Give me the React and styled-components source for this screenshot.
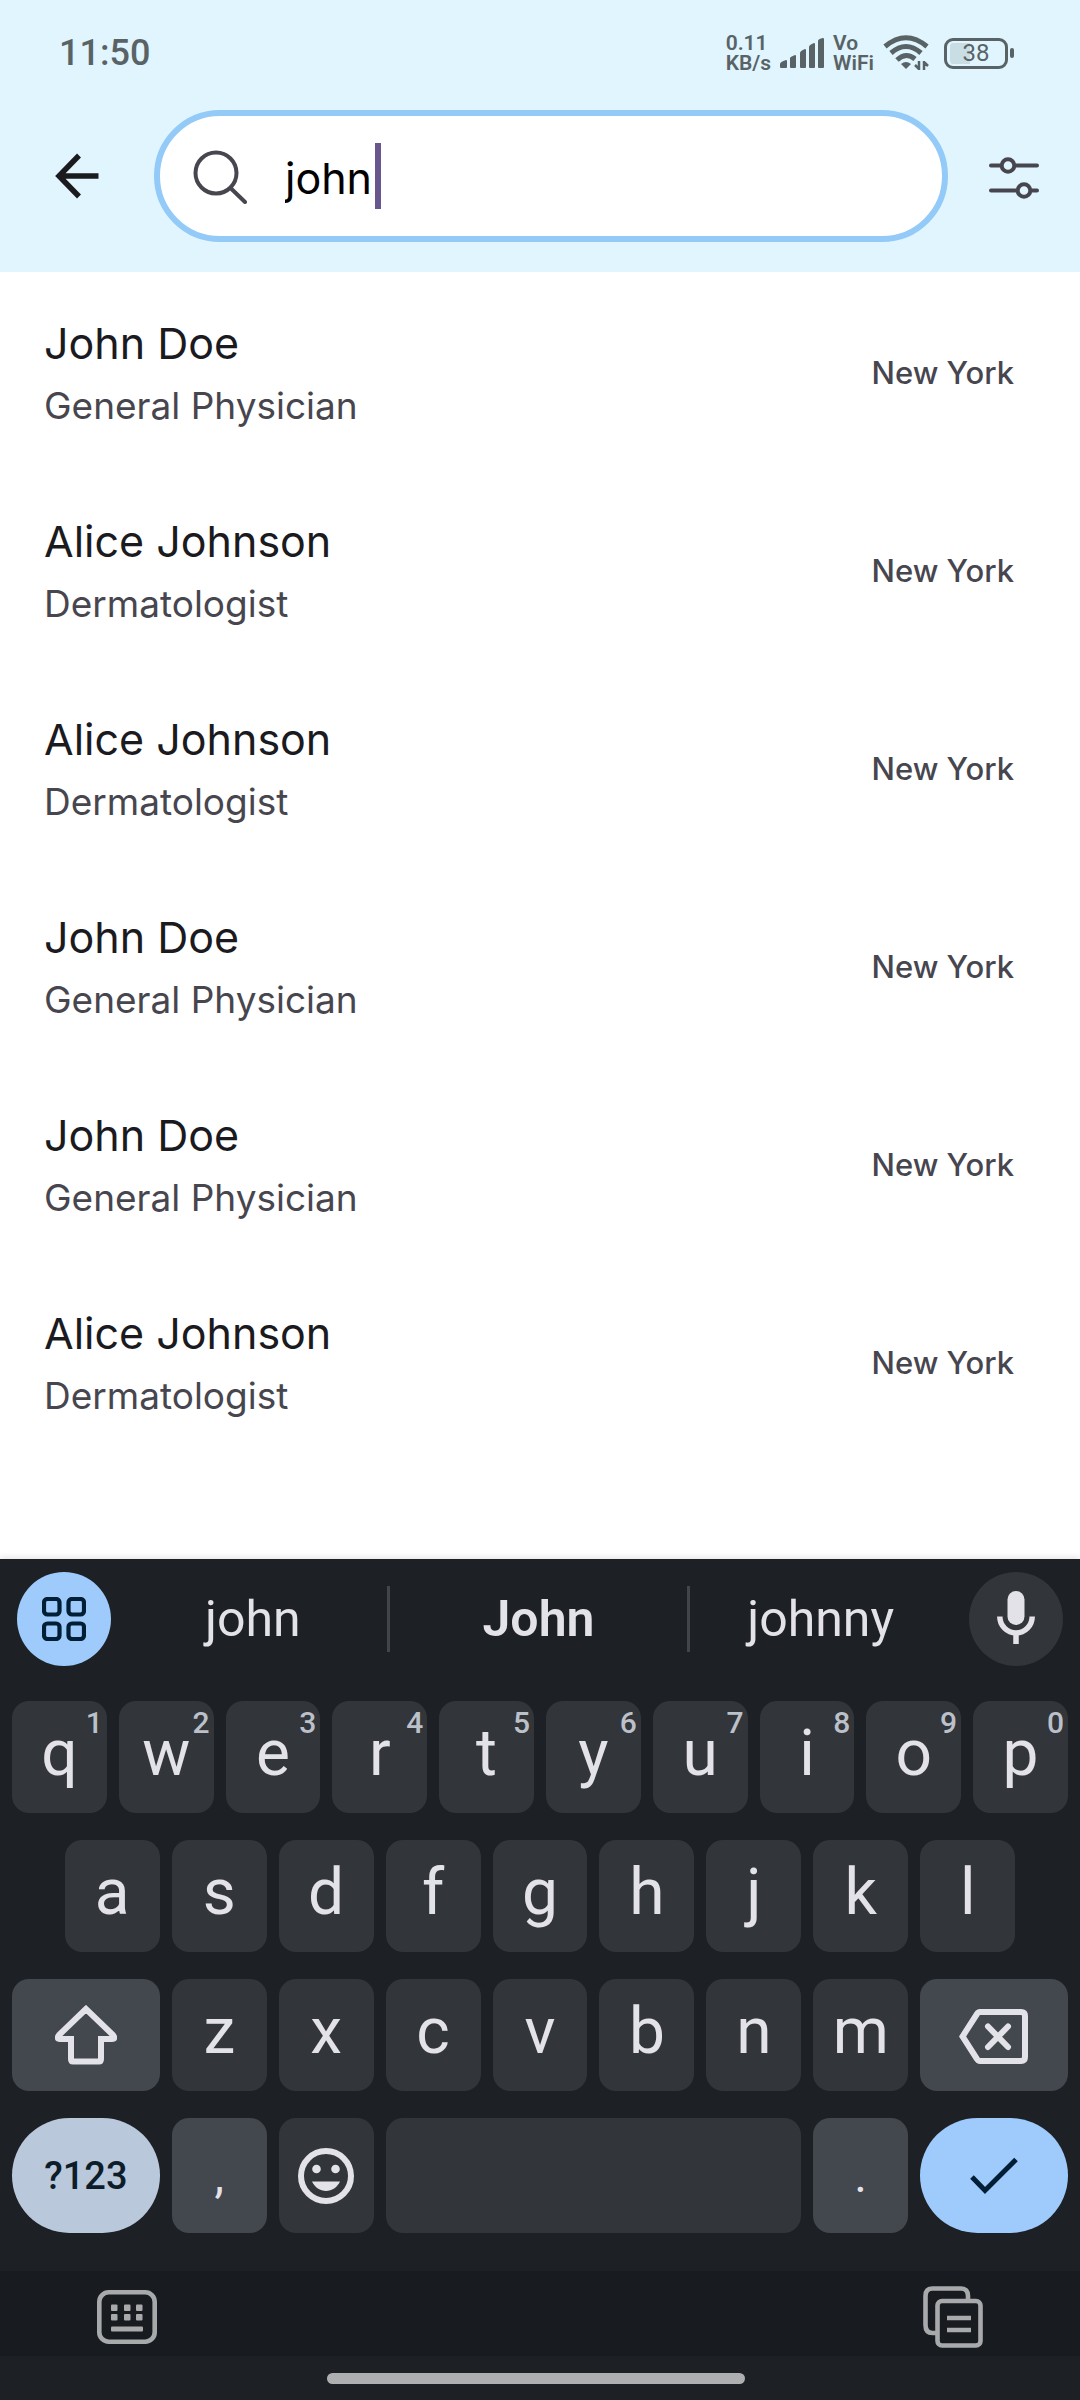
import React, { useState } from "react";
import styled, { createGlobalStyle } from "styled-components";

const GlobalStyle = createGlobalStyle`
  * { box-sizing: border-box; }
  body {
    margin: 0;
    background: #ffffff;
    font-family: Inter, "Liberation Sans", sans-serif;
  }
  button {
    margin: 0;
    padding: 0;
    border: 0;
    background: none;
    color: inherit;
    font: inherit;
    cursor: pointer;
  }
  svg { display: block; }
`;

const Screen = styled.div`
  display: flex;
  flex-direction: column;
  min-height: 100vh;
`;

const Header = styled.header`
  background: #e0f5fe;
  padding-bottom: 30px;
`;

const StatusBar = styled.div`
  display: flex;
  align-items: center;
  justify-content: space-between;
  height: 110px;
  padding: 0 66px 4px 59px;
  color: #596366;
`;

const Clock = styled.time`
  font-family: Roboto, sans-serif;
  font-size: 36px;
  line-height: 48px;
  font-weight: 500;
`;

const StatusIcons = styled.div`
  display: flex;
  align-items: center;
  gap: 9px;
`;

const StackedText = styled.div`
  display: grid;
  font-family: Roboto, sans-serif;
  font-size: 21px;
  line-height: 20px;
  font-weight: 600;
`;

const Battery = styled.div`
  display: flex;
  align-items: center;
  gap: 2px;
  margin-left: 6px;
`;

const BatteryCell = styled.div`
  display: flex;
  align-items: center;
  justify-content: center;
  width: 64px;
  height: 31px;
  border: 3px solid #596366;
  border-radius: 9px;
  background: linear-gradient(90deg, #c8dde4 20px, transparent 20px) no-repeat content-box;
  padding: 2px 3px;
  font-family: Roboto, sans-serif;
  font-size: 24px;
  line-height: 24px;
  font-weight: 400;
`;

const BatteryTip = styled.div`
  width: 4px;
  height: 10px;
  border-radius: 2px;
  background: #596366;
`;

const SearchBar = styled.div`
  display: flex;
  align-items: center;
`;

const IconButton = styled.button`
  display: flex;
  align-items: center;
  justify-content: center;
  width: ${(p) => p.$width}px;
  height: 132px;
`;

const SearchField = styled.label`
  display: flex;
  flex: 1;
  align-items: center;
  height: 132px;
  padding: 0 30px 0 33px;
  border: 6px solid #93caf7;
  border-radius: 66px;
  background: #ffffff;
  cursor: text;
`;

const SearchInput = styled.input`
  field-sizing: content;
  min-width: 20px;
  margin-left: 38px;
  padding: 4px 3px 0 0;
  border: 0;
  outline: 0;
  background: none;
  color: #000000;
  caret-color: transparent;
  font-family: Inter, sans-serif;
  font-size: 43px;
  line-height: 66px;
`;

const Caret = styled.span`
  width: 6px;
  height: 66px;
  background: #68568f;
`;

const Results = styled.ul`
  flex: 1;
  margin: 0;
  padding: 2px 0 0;
  list-style: none;
`;

const ResultRow = styled.li`
  display: flex;
  align-items: center;
  justify-content: space-between;
  min-height: 198px;
  padding: 0 66px 0 44px;
`;

const Name = styled.div`
  color: #1b1b1f;
  font-size: 43px;
  line-height: 66px;
`;

const Specialty = styled.div`
  color: #47464f;
  font-size: 37px;
  line-height: 60px;
`;

const City = styled.div`
  color: #47464f;
  font-size: 31px;
  line-height: 44px;
  font-weight: 500;
`;

const Keyboard = styled.section`
  background: #1d2024;
  box-shadow: 0 -2px 6px rgba(0, 0, 0, 0.1);
  color: #e2e2e8;
  font-family: Roboto, sans-serif;
`;

const SuggestionBar = styled.div`
  display: flex;
  align-items: center;
  gap: 8px;
  padding: 13px 17px 35px;
`;

const RoundButton = styled.button`
  display: flex;
  flex: none;
  align-items: center;
  justify-content: center;
  width: 94px;
  height: 94px;
  border-radius: 50%;
  background: ${(p) => (p.$accent ? "#9ecafc" : "#32353a")};
`;

const Suggestions = styled.div`
  display: grid;
  flex: 1;
  grid-template-columns: 27fr 30fr 26fr;
  margin-right: 10px;
`;

const Suggestion = styled.button`
  height: 66px;
  border-right: ${(p) => (p.$last ? 0 : 3)}px solid #42454a;
  font-size: 50px;
  line-height: 66px;
  font-weight: ${(p) => (p.$strong ? 600 : 400)};
`;

const Keys = styled.div`
  display: grid;
  gap: 27px;
  padding: 0 12px 38px;
`;

const KeyRow = styled.div`
  display: flex;
  gap: 12px;
  padding: 0 ${(p) => (p.$inset ? 5 : 0)}%;
`;

const keyColors = {
  letter: { back: "#32353a", text: "#e2e2e8" },
  side: { back: "#43474e", text: "#e2e2e8" },
  symbols: { back: "#bac8dc", text: "#0d1d2a" },
  enter: { back: "#9ecafc", text: "#001e35" },
};

const KeyButton = styled.button`
  position: relative;
  display: flex;
  flex: ${(p) => p.$grow || "1 1 0"};
  align-items: center;
  justify-content: center;
  min-width: 0;
  height: ${(p) => (p.$tall ? 115 : 112)}px;
  padding-bottom: ${(p) => (p.$raised ? 6 : 0)}px;
  border-radius: ${(p) => (p.$pill ? 58 : 17)}px;
  background: ${(p) => keyColors[p.$tone || "letter"].back};
  color: ${(p) => keyColors[p.$tone || "letter"].text};
  font-size: ${(p) => p.$size || 64}px;
  line-height: 64px;
  font-weight: ${(p) => (p.$pill ? 500 : 400)};
`;

const Hint = styled.span`
  position: absolute;
  top: 4px;
  right: 4px;
  color: #bcc0c9;
  font-size: 30px;
  line-height: 36px;
  font-weight: 500;
`;

const NavStrip = styled.div`
  display: flex;
  align-items: center;
  justify-content: space-between;
  height: 85px;
  padding: 6px 97px 0;
  background: #181b20;
`;

const HomeArea = styled.div`
  display: flex;
  justify-content: center;
  padding: 17px 8px 16px 0;
`;

const HomeHandle = styled.div`
  width: 39%;
  height: 11px;
  border-radius: 6px;
  background: #aeafb1;
`;

const SignalIcon = () => (
  <svg width="44" height="30" viewBox="0 0 44 30" fill="#596366">
    <path d="M0 29v-3q0-2 6-4q1 0 1 1v6q0 1-1 1H1q-1 0-1-1z" />
    <path d="M10 29V20q0-1 5-3q1 0 1 1v11q0 1-1 1h-4q-1 0-1-1z" />
    <path d="M20 29V15q0-2 5-4q1 0 1 1v17q0 1-1 1h-4q-1 0-1-1z" />
    <path d="M29 29V9q0-2 5-4q1 0 1 1v23q0 1-1 1h-4q-1 0-1-1z" />
    <path d="M38 29V3q0-2 5-3q1 0 1 1v28q0 1-1 1h-4q-1 0-1-1z" />
  </svg>
);

const WifiIcon = () => (
  <svg width="46" height="36" viewBox="0 0 46 36" fill="none" stroke="#596366" strokeWidth="5">
    <path d="M2 11.500Q23-6 44 11.500" />
    <path d="M8 18Q23 5 38 18" />
    <path d="M14 25Q23 16.500 32 24" />
    <path d="M18 29q5-4 10 0l-5 5z" fill="#596366" stroke="none" />
    <path d="M36 35V26M41 35V26M36 34l-4-4M41 27l4 4" strokeWidth="2.500" />
  </svg>
);

const BackIcon = () => (
  <svg width="44" height="46" viewBox="0 0 44 46" fill="none" stroke="#1b1b1f" strokeWidth="5.500">
    <path d="M43.500 23H4M24 2.500L4 23l20 20.500" />
  </svg>
);

const SearchIcon = () => (
  <svg width="54" height="56" viewBox="0 -1 54 56" fill="none" stroke="#47464f" strokeWidth="4" strokeLinecap="round">
    <circle cx="23" cy="24" r="20.500" />
    <path d="M38 39.500L52 53" />
  </svg>
);

const FilterIcon = () => (
  <svg width="50" height="46" viewBox="0 -4 50 46" fill="none" stroke="#47464f" strokeWidth="4" strokeLinecap="round">
    <path d="M2 8.500h10M26 8.500h22M2 33.500h26M42 33.500h6" />
    <circle cx="19" cy="8.500" r="6.300" />
    <circle cx="35" cy="33.500" r="6.300" />
  </svg>
);

const GridIcon = () => (
  <svg width="44" height="44" viewBox="0 0 44 44" fill="none" stroke="#001e35" strokeWidth="4.200">
    <rect x="2" y="2" width="15.500" height="15.500" rx="3.500" />
    <rect x="26.500" y="2" width="15.500" height="15.500" rx="3.500" />
    <rect x="2" y="26.500" width="15.500" height="15.500" rx="3.500" />
    <rect x="26.500" y="26.500" width="15.500" height="15.500" rx="3.500" />
  </svg>
);

const MicIcon = () => (
  <svg width="38" height="56" viewBox="0 0 38 56" fill="none" stroke="#e2e2e8" strokeWidth="5.500">
    <rect x="10.500" y="0" width="17" height="34" rx="8.500" fill="#e2e2e8" stroke="none" />
    <path d="M2.800 25.500a16.200 16.500 0 0 0 32.400 0M19 42v11" />
  </svg>
);

const ShiftIcon = () => (
  <svg width="62" height="60" viewBox="0 0 62 60" fill="none" stroke="#e2e2e8" strokeWidth="6">
    <path d="M31 4L4 30q-3 4 1 4H16V54q0 2.500 2 2.500H44q2 0 2-2.500V34H57q4 0 1-4z" />
  </svg>
);

const DeleteIcon = () => (
  <svg width="70" height="60" viewBox="0 -4 70 60" fill="none" stroke="#e2e2e8" strokeWidth="6">
    <path d="M21 3H62q4 0 4 4V48q0 4-4 4H21q-2 0-3-2L3.500 27.500L18 5q1-2 3-2z" />
    <path d="M29 17.500L49 38M49 17.500L29 38" strokeLinecap="round" />
  </svg>
);

const SmileIcon = () => (
  <svg width="56" height="56" viewBox="0 0 56 56" fill="#e2e2e8">
    <circle cx="28" cy="28" r="25" fill="none" stroke="#e2e2e8" strokeWidth="6" />
    <circle cx="18.500" cy="21" r="4.300" />
    <circle cx="37.500" cy="21" r="4.300" />
    <path d="M14 33.500h28c-3 6-8 9.500-14 9.500s-11-3.500-14-9.500z" />
  </svg>
);

const CheckIcon = () => (
  <svg width="48" height="38" viewBox="0 0 48 38" fill="none" stroke="#001e35" strokeWidth="5">
    <path d="M2 20L15 33.500L46 2.500" />
  </svg>
);

const KeyboardIcon = () => (
  <svg width="60" height="54" viewBox="0 0 60 54" fill="#a8a9ab">
    <rect x="2.300" y="2.300" width="55.400" height="49.400" rx="9.500" fill="none" stroke="#a8a9ab" strokeWidth="4.600" />
    {[14, 27, 39].map((x) => (
      <React.Fragment key={x}>
        <rect x={x} y="14.500" width="6.500" height="6.500" rx="1" />
        <rect x={x} y="24" width="6.500" height="6.500" rx="1" />
      </React.Fragment>
    ))}
    <rect x="14" y="36.500" width="32" height="5" rx="1" />
  </svg>
);

const ClipboardIcon = () => (
  <svg width="60" height="62" viewBox="0 0 60 62" fill="none" stroke="#a8a9ab" strokeWidth="4.600">
    <path d="M45 14V10q0-7.500-7-7.500H9.500q-7 0-7 7.500V39q0 8 7 8H13" />
    <rect x="14.500" y="15" width="43" height="44.500" rx="4.500" />
    <path d="M24 32H48M24 44H48" />
  </svg>
);

const doctors = {
  john: { name: "John Doe", specialty: "General Physician", city: "New York" },
  alice: { name: "Alice Johnson", specialty: "Dermatologist", city: "New York" },
};
const results = ["john", "alice", "alice", "john", "john", "alice"].map((id) => doctors[id]);

const Key = ({ letter, hint }) => (
  <KeyButton type="button" $raised>
    {letter}
    {hint && <Hint>{hint}</Hint>}
  </KeyButton>
);

export default function App() {
  const [query, setQuery] = useState("john");
  return (
    <Screen>
      <GlobalStyle />
      <Header>
        <StatusBar>
          <Clock>11:50</Clock>
          <StatusIcons>
            <StackedText><span>0.11</span><span>KB/s</span></StackedText>
            <SignalIcon />
            <StackedText><span>Vo</span><span>WiFi</span></StackedText>
            <WifiIcon />
            <Battery>
              <BatteryCell>38</BatteryCell>
              <BatteryTip />
            </Battery>
          </StatusIcons>
        </StatusBar>
        <SearchBar>
          <IconButton type="button" aria-label="Back" $width={154}><BackIcon /></IconButton>
          <SearchField>
            <SearchIcon />
            <SearchInput aria-label="Search doctors" value={query} onChange={(e) => setQuery(e.target.value)} />
            <Caret />
          </SearchField>
          <IconButton type="button" aria-label="Filters" $width={132}><FilterIcon /></IconButton>
        </SearchBar>
      </Header>

      <Results>
        {results.map((r, i) => (
          <ResultRow key={i}>
            <div>
              <Name>{r.name}</Name>
              <Specialty>{r.specialty}</Specialty>
            </div>
            <City>{r.city}</City>
          </ResultRow>
        ))}
      </Results>

      <Keyboard aria-label="Keyboard">
        <SuggestionBar>
          <RoundButton type="button" aria-label="Toolbar" $accent><GridIcon /></RoundButton>
          <Suggestions>
            <Suggestion type="button">john</Suggestion>
            <Suggestion type="button" $strong>John</Suggestion>
            <Suggestion type="button" $last>johnny</Suggestion>
          </Suggestions>
          <RoundButton type="button" aria-label="Voice input"><MicIcon /></RoundButton>
        </SuggestionBar>
        <Keys>
          <KeyRow>
            {[..."qwertyuiop"].map((c, i) => <Key key={c} letter={c} hint={String((i + 1) % 10)} />)}
          </KeyRow>
          <KeyRow $inset>
            {[..."asdfghjkl"].map((c) => <Key key={c} letter={c} />)}
          </KeyRow>
          <KeyRow>
            <KeyButton type="button" aria-label="Shift" $tone="side" $grow="0 0 14%"><ShiftIcon /></KeyButton>
            {[..."zxcvbnm"].map((c) => <Key key={c} letter={c} />)}
            <KeyButton type="button" aria-label="Delete" $tone="side" $grow="0 0 14%"><DeleteIcon /></KeyButton>
          </KeyRow>
          <KeyRow>
            <KeyButton type="button" $tone="symbols" $tall $pill $size={38} $grow="0 0 14%">?123</KeyButton>
            <KeyButton type="button" $tone="side" $tall $size={48} $grow="0 0 9%">,</KeyButton>
            <KeyButton type="button" aria-label="Emoji" $tall $grow="0 0 9%"><SmileIcon /></KeyButton>
            <KeyButton type="button" aria-label="Space" $tall />
            <KeyButton type="button" $tone="side" $tall $size={48} $grow="0 0 9%">.</KeyButton>
            <KeyButton type="button" aria-label="Done" $tone="enter" $tall $pill $grow="0 0 14%"><CheckIcon /></KeyButton>
          </KeyRow>
        </Keys>
        <NavStrip>
          <button type="button" aria-label="Switch keyboard"><KeyboardIcon /></button>
          <button type="button" aria-label="Clipboard"><ClipboardIcon /></button>
        </NavStrip>
        <HomeArea><HomeHandle /></HomeArea>
      </Keyboard>
    </Screen>
  );
}
